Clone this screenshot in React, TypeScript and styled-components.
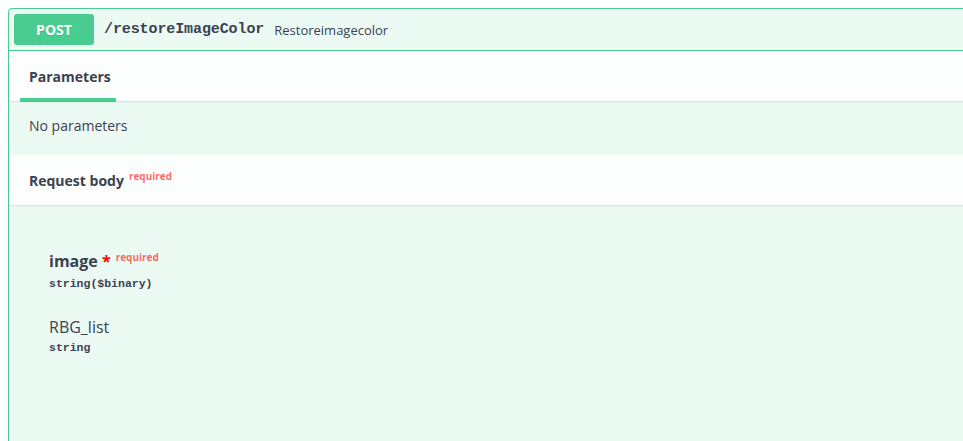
import React from "react";
import styled, { createGlobalStyle } from "styled-components";

const Global = createGlobalStyle`
  html, body { margin: 0; padding: 0; background: #ffffff; overflow: hidden; }
  body { padding: 8px; font-family: "Open Sans", "Noto Sans", sans-serif; color: #3b4151; }
`;

const Opblock = styled.div`
  width: 1000px;
  border: 1px solid #49cc90;
  border-radius: 4px;
  background: rgba(73, 204, 144, 0.1);
  display: flex;
  flex-direction: column;
`;

const Summary = styled.div`
  display: flex;
  align-items: center;
  padding: 5px;
  border-bottom: 1px solid #49cc90;
`;

const Method = styled.span`
  min-width: 80px;
  box-sizing: border-box;
  height: 31px;
  display: inline-flex;
  align-items: center;
  justify-content: center;
  border-radius: 3px;
  background: #49cc90;
  color: #fff;
  font-size: 14px;
  font-weight: 700;
  text-shadow: 0 1px 0 rgba(0, 0, 0, 0.1);
`;

const Path = styled.span`
  padding: 0 10px;
  font-family: "Liberation Mono", "DejaVu Sans Mono", monospace;
  font-size: 15px;
  font-weight: 700;
  color: #3b4151;
  letter-spacing: -0.1px;
`;

const Desc = styled.span`
  font-size: 13px;
  color: #3b4151;
`;

const SectionHeader = styled.div`
  min-height: 50px;
  box-sizing: border-box;
  padding: 0 20px;
  display: flex;
  align-items: center;
  background: rgba(255, 255, 255, 0.8);
  box-shadow: 0 1px 2px rgba(0, 0, 0, 0.1);
  position: relative;
`;

const TabTitle = styled.h4<{ $active?: boolean }>`
  margin: 0;
  font-size: 14px;
  font-weight: 700;
  color: #3b4151;
  position: relative;
  &::after {
    content: "";
    display: ${(p) => (p.$active ? "block" : "none")};
    position: absolute;
    left: -9px;
    right: -5px;
    bottom: -16px;
    height: 4px;
    background: #49cc90;
  }
`;

const Required = styled.span`
  font-size: 10px;
  font-weight: 700;
  color: rgba(255, 0, 0, 0.6);
  padding-left: 5px;
  position: relative;
  top: -6px;
`;

const DescWrapper = styled.div`
  padding: 15px 20px 19px;
  font-size: 14px;
  line-height: 20px;
`;

const BodyWrapper = styled.div`
  padding: 46px 40px 0;
  min-height: 228px;
  display: flex;
  flex-direction: column;
  gap: 25px;
`;

const Param = styled.div`
  display: flex;
  flex-direction: column;
  gap: 3px;
`;

const ParamName = styled.div<{ $required?: boolean }>`
  font-size: 16px;
  line-height: 20px;
  font-weight: ${(p) => (p.$required ? 700 : 400)};
  color: #3b4151;
`;

const Star = styled.span`
  color: red;
  font-size: 16px;
`;

const ParamRequired = styled.span`
  font-size: 10px;
  font-weight: 700;
  color: rgba(255, 0, 0, 0.6);
  padding-left: 5px;
  position: relative;
  top: -6px;
`;

const ParamType = styled.div`
  font-family: "Liberation Mono", "DejaVu Sans Mono", monospace;
  font-size: 11.5px;
  font-weight: 700;
  line-height: 16px;
  color: #3b4151;
`;

export default function App() {
  return (
    <>
      <Global />
      <Opblock>
        <Summary>
          <Method>POST</Method>
          <Path>/restoreImageColor</Path>
          <Desc>Restoreimagecolor</Desc>
        </Summary>
        <SectionHeader>
          <TabTitle $active>Parameters</TabTitle>
        </SectionHeader>
        <DescWrapper>No parameters</DescWrapper>
        <SectionHeader>
          <TabTitle>
            Request body<Required>required</Required>
          </TabTitle>
        </SectionHeader>
        <BodyWrapper>
          <Param>
            <ParamName $required>
              image<Star>&nbsp;*</Star>
              <ParamRequired>required</ParamRequired>
            </ParamName>
            <ParamType>string($binary)</ParamType>
          </Param>
          <Param>
            <ParamName>RBG_list</ParamName>
            <ParamType>string</ParamType>
          </Param>
        </BodyWrapper>
      </Opblock>
    </>
  );
}
